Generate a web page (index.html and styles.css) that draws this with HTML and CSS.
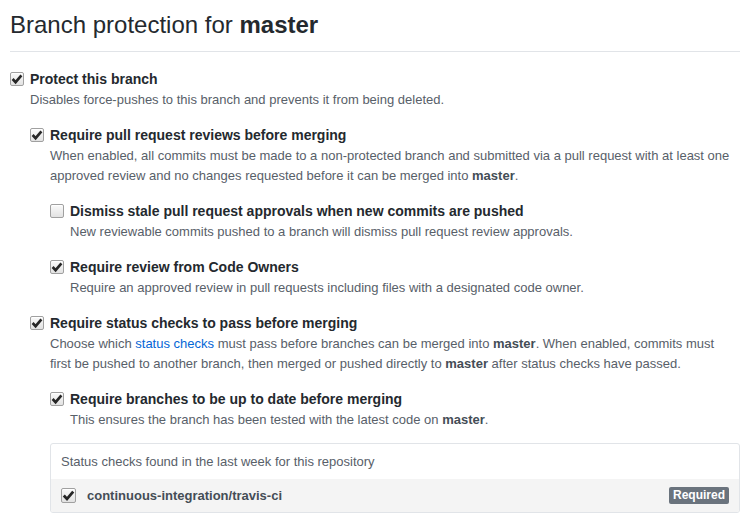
FILE: index.html
```html
<!DOCTYPE html>
<html>
<head>
<meta charset="utf-8">
<link rel="stylesheet" href="styles.css">
</head>
<body>
<div class="page">
  <div class="subhead"><h2 class="subhead-heading">Branch protection for <strong>master</strong></h2></div>

  <div class="form-checkbox first">
    <span class="cb checked"><svg viewBox="0 0 14 14"><path d="M2.6 7 L5.6 10.2 L11.4 3.4"/></svg></span>
    <label class="lbl">Protect this branch</label>
    <p class="note">Disables force-pushes to this branch and prevents it from being deleted.</p>

    <div class="form-checkbox">
      <span class="cb checked"><svg viewBox="0 0 14 14"><path d="M2.6 7 L5.6 10.2 L11.4 3.4"/></svg></span>
      <label class="lbl">Require pull request reviews before merging</label>
      <p class="note">When enabled, all commits must be made to a non-protected branch and submitted via a pull request with at least one approved review and no changes requested before it can be merged into <strong>master</strong>.</p>

      <div class="form-checkbox">
        <span class="cb"></span>
        <label class="lbl">Dismiss stale pull request approvals when new commits are pushed</label>
        <p class="note">New reviewable commits pushed to a branch will dismiss pull request review approvals.</p>
      </div>

      <div class="form-checkbox">
        <span class="cb checked"><svg viewBox="0 0 14 14"><path d="M2.6 7 L5.6 10.2 L11.4 3.4"/></svg></span>
        <label class="lbl">Require review from Code Owners</label>
        <p class="note">Require an approved review in pull requests including files with a designated code owner.</p>
      </div>
    </div>

    <div class="form-checkbox">
      <span class="cb checked"><svg viewBox="0 0 14 14"><path d="M2.6 7 L5.6 10.2 L11.4 3.4"/></svg></span>
      <label class="lbl">Require status checks to pass before merging</label>
      <p class="note narrow">Choose which <a href="#">status checks</a> must pass before branches can be merged into <strong>master</strong>. When enabled, commits must first be pushed to another branch, then merged or pushed directly to <strong>master</strong> after status checks have passed.</p>

      <div class="form-checkbox">
        <span class="cb checked"><svg viewBox="0 0 14 14"><path d="M2.6 7 L5.6 10.2 L11.4 3.4"/></svg></span>
        <label class="lbl">Require branches to be up to date before merging</label>
        <p class="note">This ensures the branch has been tested with the latest code on <strong>master</strong>.</p>
      </div>

      <div class="box">
        <div class="box-header">Status checks found in the last week for this repository</div>
        <div class="box-row">
          <span class="cb checked"><svg viewBox="0 0 14 14"><path d="M2.6 7 L5.6 10.2 L11.4 3.4"/></svg></span>
          <span class="check-name">continuous-integration/travis-ci</span>
          <span class="badge">Required</span>
        </div>
      </div>
    </div>
  </div>
</div>
</body>
</html>
```

FILE: styles.css
```css
* { box-sizing: border-box; }
html, body { margin: 0; padding: 0; background: #fff; }
body {
  font-family: "Liberation Sans", Arial, Helvetica, sans-serif;
  font-size: 14px;
  line-height: 1.5;
  color: #24292e;
}
.page {
  padding: 10px 9px 0 10px;
}
.subhead {
  display: flex;
  padding-bottom: 11px;
  border-bottom: 1px solid #e1e4e8;
  margin-bottom: 17px;
}
.subhead-heading {
  margin: 0;
  font-size: 24px;
  font-weight: 400;
  line-height: 30px;
}
.subhead-heading strong { font-weight: 700; }
.form-checkbox {
  padding-left: 20px;
  margin: 15px 0;
}
.form-checkbox.first { margin-top: 0; }
.form-checkbox > .cb {
  float: left;
  margin: 3px 0 0 -20px;
}
.lbl {
  display: block;
  font-weight: 700;
  font-size: 14px;
  line-height: 21px;
}
.note {
  margin: 0;
  font-size: 13px;
  line-height: 20px;
  color: #586069;
}
.note.narrow { max-width: 682px; }
.note strong { color: #444d56; }
.note a { color: #0366d6; text-decoration: none; }
.cb {
  display: block;
  width: 14px;
  height: 14px;
  border: 1px solid #a0a0a0;
  border-radius: 2px;
  background: linear-gradient(#fafafa, #e2e2e2);
  box-shadow: inset 0 1px 0 #fff;
}
.cb svg {
  display: block;
  width: 14px;
  height: 14px;
  margin: -1px 0 0 -1px;
  fill: none;
  stroke: #262626;
  stroke-width: 2.6;
  stroke-linecap: butt;
  stroke-linejoin: miter;
}
.box {
  margin-top: -2px;
  border: 1px solid #e1e4e8;
  border-radius: 3px;
  overflow: hidden;
}
.box-header {
  padding: 8px 10px;
  font-size: 13px;
  line-height: 19px;
  color: #586069;
}
.box-row {
  display: flex;
  align-items: center;
  padding: 8px 10px;
  background: #f4f4f4;
  min-height: 33px;
}
.box-row .cb { flex: none; width: 15px; height: 15px; }
.box-row .cb svg { width: 15px; height: 15px; }
.check-name {
  margin-left: 11px;
  font-size: 13px;
  font-weight: 700;
  color: #444d56;
  line-height: 16px;
}
.badge {
  margin-left: auto;
  background: #6a737d;
  color: #fff;
  font-size: 12px;
  font-weight: 700;
  line-height: 17px;
  padding: 0 4px;
  border-radius: 2px;
}
```
